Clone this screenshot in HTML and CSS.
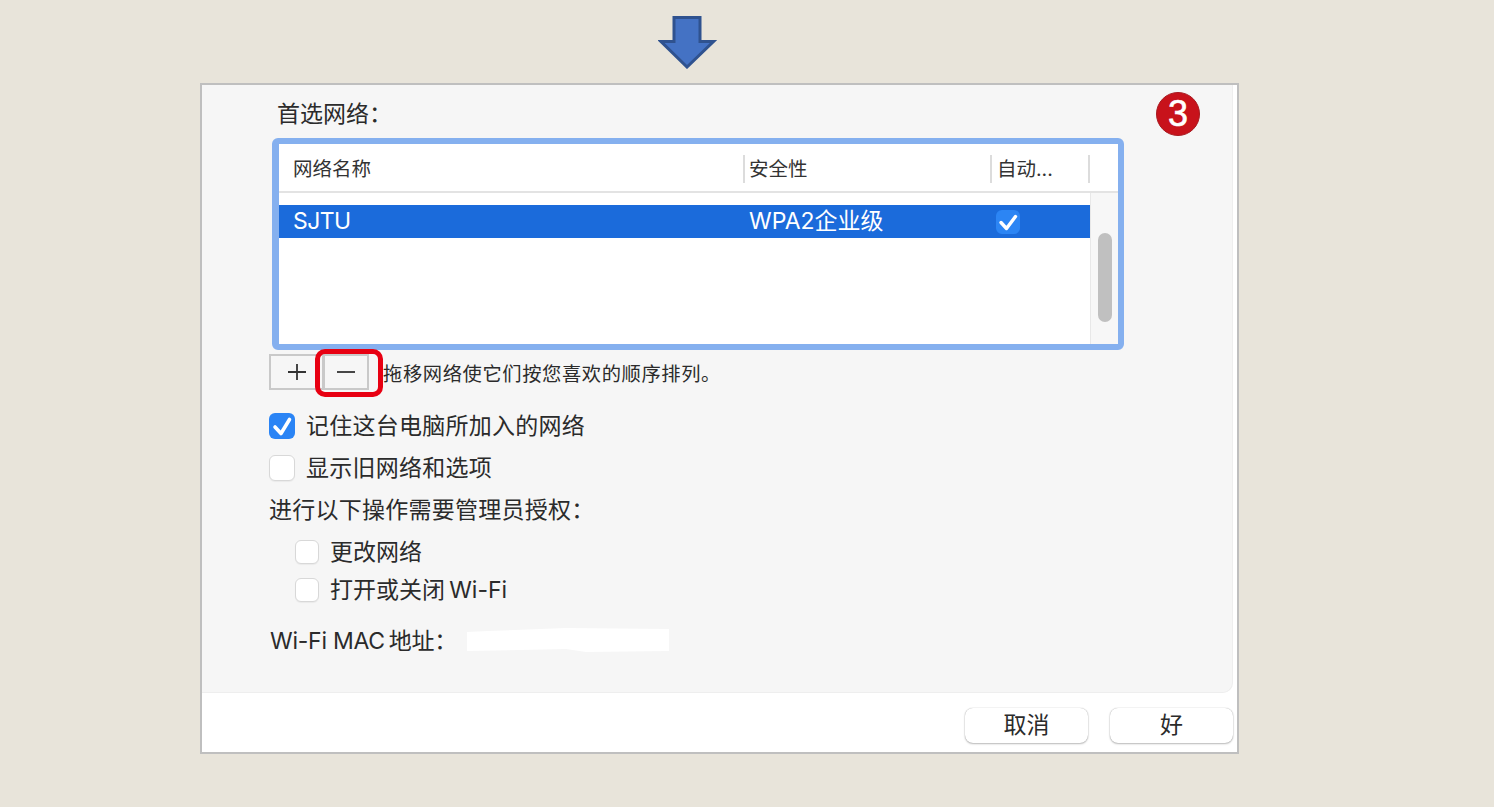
FILE: index.html
```html
<!DOCTYPE html>
<html lang="zh-CN">
<head>
<meta charset="utf-8">
<title>首选网络</title>
<link rel="stylesheet" href="styles.css">
</head>
<body>
<div class="arrow-row">
  <svg class="arrow" width="60" height="54" viewBox="0 0 60 54"><path d="M16 2.5H42V26.5H55.5L29 52 3 26.5H16Z" fill="#4472c4" stroke="#2f528f" stroke-width="3"/></svg>
</div>
<main class="window">
  <div class="badge">3</div>
  <section class="panel">
    <div class="title">首选网络：</div>
    <div class="list-box">
      <div class="list-head">
        <div class="col col-name">网络名称</div>
        <div class="col col-sec">安全性</div>
        <div class="col col-auto">自动...</div>
      </div>
      <div class="list-body">
        <div class="list-rows">
          <div class="row-sel">
            <span class="cell-name">SJTU</span>
            <span class="cell-sec">WPA2企业级</span>
            <span class="cell-auto"><span class="check check-sm"><svg viewBox="0 0 24 24" width="24" height="24"><path d="M5 12.5l5.5 6 9-12" fill="none" stroke="#fff" stroke-width="3.4" stroke-linecap="round" stroke-linejoin="round"/></svg></span></span>
          </div>
        </div>
        <div class="scroll-track"><div class="scroll-thumb"></div></div>
      </div>
    </div>
    <div class="tools">
      <button class="tool tool-plus">
        <svg width="20" height="20" viewBox="0 0 20 20"><path d="M10 2v16M1 10h18" stroke="#333" stroke-width="1.8"/></svg>
      </button>
      <button class="tool tool-minus">
        <svg width="20" height="20" viewBox="0 0 20 20"><path d="M1 10h18" stroke="#333" stroke-width="1.8"/></svg>
      </button>
      <span class="hint">拖移网络使它们按您喜欢的顺序排列。</span>
      <div class="red-frame"></div>
    </div>
    <label class="opt opt-first"><span class="check"><svg viewBox="0 0 26 26" width="26" height="26"><path d="M6 14l6 6.5 8.5-14" fill="none" stroke="#fff" stroke-width="3.6" stroke-linecap="round" stroke-linejoin="round"/></svg></span><span class="txt">记住这台电脑所加入的网络</span></label>
    <label class="opt"><span class="box"></span><span class="txt">显示旧网络和选项</span></label>
    <div class="opt"><span class="txt">进行以下操作需要管理员授权：</span></div>
    <label class="opt-sub opt-sub-first"><span class="box box-sm"></span><span class="txt">更改网络</span></label>
    <label class="opt-sub"><span class="box box-sm"></span><span class="txt">打开或关闭&#8201;Wi-Fi</span></label>
    <div class="mac"><span class="mac-label">Wi-Fi MAC&#8201;地址：</span>
      <svg class="blot" width="204" height="26" viewBox="0 0 204 26"><path d="M1 5 22 4 100 1 203 2V24L120 25 100 22 1 24Z" fill="#fff"/></svg>
    </div>
  </section>
  <footer class="footer">
    <button class="btn">取消</button>
    <button class="btn">好</button>
  </footer>
</main>
</body>
</html>
```
FILE: styles.css
```css
* { box-sizing: border-box; }
html, body { margin: 0; padding: 0; }
body {
  width: 1494px;
  height: 807px;
  overflow: hidden;
  background: #e8e4da;
  color: #2b2b2b;
  font-family: Inter, "Noto Sans CJK SC", sans-serif;
  font-size: 23px;
}
.arrow-row { height: 83px; padding: 15px 0 0 658px; }
.arrow { display: block; }
.window {
  position: relative;
  width: 1039px;
  height: 671px;
  margin-left: 200px;
  border: 2px solid #bfbfbf;
  background: #fff;
  display: flex;
  flex-direction: column;
}
.badge {
  position: absolute;
  left: 954px;
  top: 7px;
  width: 44px;
  height: 44px;
  border-radius: 50%;
  background: #c8121b;
  border: 1px solid #a81a20;
  color: #fff;
  font-family: "Liberation Sans", sans-serif;
  font-size: 36px;
  line-height: 42px;
  text-align: center;
  -webkit-text-stroke: 0.6px #fff;
}
.panel {
  width: 1031px;
  height: 608px;
  padding: 12px 0 0 68px;
  background: #f6f6f6;
  border-bottom: 1px solid #eeeeee;
  border-right: 1px solid #eeeeee;
  border-bottom-right-radius: 10px;
}
.title { height: 32px; line-height: 32px; margin-left: 7px; padding-top: 1px; }
.list-box {
  width: 852px;
  height: 212px;
  margin: 9px 0 0 2px;
  border: 6px solid #85b0ef;
  border-left-width: 7px;
  border-radius: 6px;
  background: #fff;
  display: flex;
  flex-direction: column;
}
.list-head {
  height: 49px;
  flex: none;
  padding-top: 3px;
  display: flex;
  align-items: center;
  border-bottom: 2px solid #e3e3e3;
  font-size: 19.5px;
  color: #333;
}
.col { height: 28px; line-height: 28px; white-space: nowrap; }
.col-name { width: 464px; padding-left: 14px; }
.col-sec { width: 247px; padding-left: 4px; border-left: 2px solid #dcdcdc; }
.col-auto { width: 100px; padding-left: 5px; border-left: 2px solid #dcdcdc; border-right: 2px solid #dcdcdc; }
.list-body { flex: 1; display: flex; min-height: 0; }
.list-rows { width: 811px; padding-top: 12px; }
.row-sel {
  height: 33px;
  line-height: 33px;
  display: flex;
  align-items: center;
  background: #1b6bdb;
  color: #fff;
}
.cell-name { width: 464px; padding-left: 14px; letter-spacing: -.6px; }
.cell-sec { width: 247px; padding-left: 6px; }
.cell-auto { display: flex; padding-left: 6px; }
.scroll-track {
  flex: 1;
  padding: 40px 0 0 7px;
  background: #f7f7f7;
  border-left: 1px solid #e8e8e8;
}
.scroll-thumb { width: 14px; height: 89px; border-radius: 7px; background: #c0c0c0; }
.tools {
  position: relative;
  height: 36px;
  margin: 4px 0 0 -1px;
  display: flex;
  align-items: center;
}
.tool {
  height: 36px;
  padding: 0;
  display: flex;
  align-items: center;
  justify-content: center;
  background: #f6f6f6;
  border: 2px solid #c9c9c9;
}
.tool-plus { width: 55px; }
.tool-minus { width: 46px; margin-left: -1px; }
.hint { margin-left: 14px; padding-top: 4px; font-size: 19.3px; letter-spacing: .6px; line-height: 32px; white-space: nowrap; }
.red-frame {
  position: absolute;
  left: 46px;
  top: -5px;
  width: 68px;
  height: 48px;
  border: 5px solid #e80012;
  border-radius: 10px;
}
.opt { height: 42px; margin-left: -1px; display: flex; align-items: center; white-space: nowrap; letter-spacing: .25px; }
.opt-first { margin-top: 15px; }
.txt { padding-bottom: 4px; }
.check, .box {
  flex: none;
  width: 26px;
  height: 26px;
  margin-right: 11px;
  border-radius: 6px;
}
.check { background: #2a84f5; }
.check svg { display: block; }
.check-sm { width: 24px; height: 24px; margin: 0; background: #2c85f4; }
.box { background: #fff; border: 1px solid #d8d8d8; box-shadow: 0 1px 1px rgba(0,0,0,.05); }
.box-sm { width: 24px; height: 24px; }
.opt-sub { height: 38px; display: flex; align-items: center; padding-left: 25px; white-space: nowrap; }
.opt-sub-first { margin-top: 2px; }
.mac { height: 38px; margin-top: 12px; display: flex; align-items: center; white-space: nowrap; }
.mac-label { width: 196px; padding-bottom: 2px; letter-spacing: -.25px; }
.blot { flex: none; }
.footer {
  flex: 1;
  display: flex;
  justify-content: flex-end;
  gap: 22px;
  padding: 15px 4px 0 0;
}
.btn {
  width: 123px;
  height: 35px;
  padding: 0;
  border: 0;
  border-radius: 8px;
  background: #fff;
  color: #2b2b2b;
  font: inherit;
  line-height: 35px;
  box-shadow: 0 0 1px rgba(0,0,0,.35), 0 1px 2px rgba(0,0,0,.25);
}
```
